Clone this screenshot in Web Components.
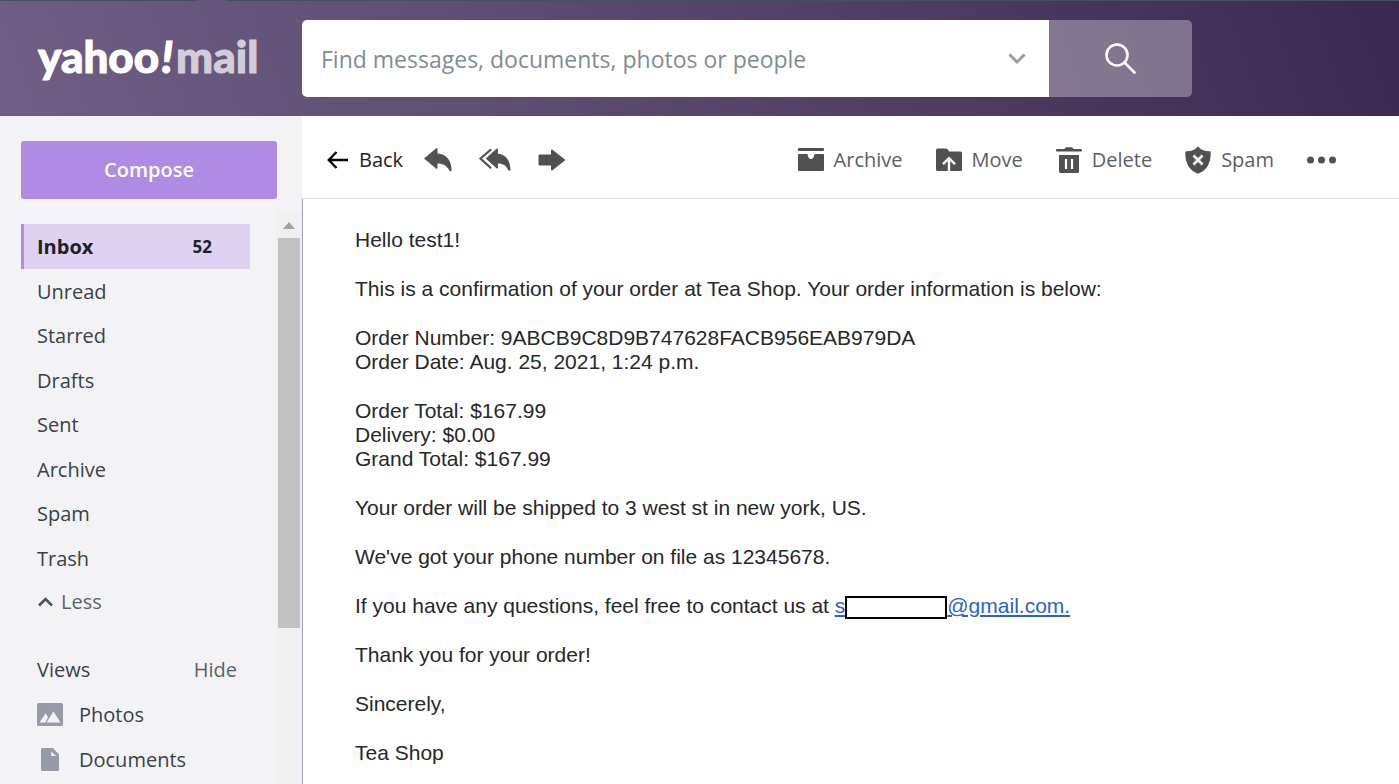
<!DOCTYPE html>
<html lang="en">
<head>
<meta charset="utf-8">
<title>Yahoo Mail</title>
<style>
  body { margin: 0; font-family: "Open Sans", "Noto Sans", sans-serif; font-size: 20px; line-height: 28px; color: #3a4148; background: #fff; }
</style>
</head>
<body>
<mail-app></mail-app>

<template id="mail-app">
  <style>
    :host { display: flex; flex-direction: column; min-height: 100vh; }
    .body { flex: 1; display: grid; grid-template-columns: 302px minmax(0, 1fr); }
    main { display: flex; flex-direction: column; min-width: 0; background: #fff; }
    mail-message { flex: 1; }
  </style>
  <mail-header></mail-header>
  <div class="body">
    <mail-sidebar></mail-sidebar>
    <main>
      <mail-toolbar></mail-toolbar>
      <mail-message>
        <p>Hello test1!</p>
        <p>This is a confirmation of your order at Tea Shop. Your order information is below:</p>
        <p>Order Number: 9ABCB9C8D9B747628FACB956EAB979DA<br>Order Date: Aug. 25, 2021, 1:24 p.m.</p>
        <p>Order Total: $167.99<br>Delivery: $0.00<br>Grand Total: $167.99</p>
        <p>Your order will be shipped to 3 west st in new york, US.</p>
        <p>We've got your phone number on file as 12345678.</p>
        <p>If you have any questions, feel free to contact us at <redacted-link></redacted-link></p>
        <p>Thank you for your order!</p>
        <p>Sincerely,</p>
        <p>Tea Shop</p>
      </mail-message>
    </main>
  </div>
</template>

<template id="mail-header">
  <style>
    :host { display: flex; box-sizing: border-box; height: 116px; padding: 20px 207px 19px 0;
      background:
        linear-gradient(90deg, #46505c 0 198px, transparent 198px 226px, #46505c 226px) 0 0 / 100% 1px no-repeat,
        linear-gradient(70deg, #705f85 0%, #65547a 22%, #4d3b62 68%, #3b284f 100%); }
    form { flex: 1; display: flex; min-width: 0; border-radius: 5px; overflow: hidden; }
    .field { flex: 1; display: flex; min-width: 0; background: #fff; }
    input { flex: 1; min-width: 0; border: 0; outline: 0; background: none; padding: 0 0 0 19px; font: inherit; font-size: 23px; color: #2c363f; }
    input::placeholder { color: #828c94; opacity: 1; }
    button { border: 0; padding: 0; background: none; display: grid; place-items: center; }
    .more { width: 64px; }
    .go { width: 143px; background: rgba(255,255,255,.32); }
    svg { display: block; }
  </style>
  <mail-logo></mail-logo>
  <form role="search">
    <div class="field">
      <input type="text" aria-label="Search mail" placeholder="Find messages, documents, photos or people">
      <button class="more" type="button" aria-label="Search options">
        <svg width="18" height="12" viewBox="0 0 18 12" fill="none" stroke="#979ba7" stroke-width="3"><path d="M1.500 1.500 9 9l7.500-7.500"/></svg>
      </button>
    </div>
    <button class="go" type="button" aria-label="Search">
      <svg width="32" height="32" viewBox="0 0 32 32" fill="none" stroke="#fff" stroke-width="2.600" stroke-linecap="round"><circle cx="12" cy="12" r="10.500"/><path d="M20 20 29.500 29.500"/></svg>
    </button>
  </form>
</template>

<template id="mail-logo">
  <style>
    :host { flex: none; box-sizing: border-box; width: 302px; padding: 12px 0 0 38px; }
    a { display: flex; font-family: Lato, sans-serif; font-weight: 900; font-size: 44px; line-height: 48px; color: #fff; text-decoration: none; -webkit-text-stroke: 1px currentColor; }
    .bang { font-style: italic; padding: 0 3px 0 2px; }
    .mail { color: #d3ccda; }
  </style>
  <a href="#" aria-label="Yahoo Mail"><span>yahoo</span><span class="bang">!</span><span class="mail">mail</span></a>
</template>

<template id="mail-sidebar">
  <style>
    :host { display: flex; flex-direction: column; background: #f3f3f6; }
    .compose { margin: 25px 25px 13px 21px; height: 58px; border: 0; border-radius: 3px; background: #b08be6; color: #fff; font: inherit; font-weight: 600; }
    .scroll { flex: 1; display: grid; grid-template-columns: minmax(0, 1fr) 26px; }
    nav { padding: 12px 26px 1px 21px; }
    ul { list-style: none; margin: 0; padding: 0; }
    .folders { display: flex; flex-direction: column; justify-content: space-between; height: 357px; --row-height: 44px; }
    .less { display: flex; align-items: center; gap: 8px; height: 38px; margin: 2px 0 27px; padding: 0 0 0 17px; border: 0; background: none; font: inherit; color: #5b636a; }
    .views { display: flex; align-items: center; justify-content: space-between; height: 44px; padding: 0 13px 0 16px; }
    h2 { margin: 0; font: inherit; }
    .hide { border: 0; padding: 0; background: none; font: inherit; color: #5b636a; }
    svg { display: block; }
    .track { display: flex; flex-direction: column; padding: 0 2px; background: #f0f0f1; }
    .up { height: 26px; display: grid; place-items: center; }
    .thumb { flex: 390; background: #c1c1c1; }
    .rest { flex: 156; }
  </style>
  <button class="compose" type="button">Compose</button>
  <div class="scroll">
    <nav aria-label="Folders">
      <ul class="folders">
        <li><folder-link current>Inbox<span slot="count">52</span></folder-link></li>
        <li><folder-link>Unread</folder-link></li>
        <li><folder-link>Starred</folder-link></li>
        <li><folder-link>Drafts</folder-link></li>
        <li><folder-link>Sent</folder-link></li>
        <li><folder-link>Archive</folder-link></li>
        <li><folder-link>Spam</folder-link></li>
        <li><folder-link>Trash</folder-link></li>
      </ul>
      <button class="less" type="button"><svg width="15" height="10" viewBox="0 0 15 10" fill="none" stroke="#4c545b" stroke-width="2.600"><path d="M1 8.500 7.500 2 14 8.500"/></svg>Less</button>
      <div class="views"><h2>Views</h2><button class="hide" type="button">Hide</button></div>
      <ul>
        <li><folder-link><svg slot="icon" width="26" height="23" viewBox="0 0 26 23"><rect width="26" height="23" rx="1.500" fill="#979ba7"/><path d="M2.500 19.500 8.500 10.500 11 14 8.500 19.500zM9.500 19.500 16.500 8.500 23.500 19.500z" fill="#f3f3f6"/></svg>Photos</folder-link></li>
        <li><folder-link><svg slot="icon" width="26" height="23" viewBox="0 0 26 23"><path d="M5.500 0h10.500l6 6.500V21.500a1.500 1.500 0 0 1-1.500 1.500h-15a1.500 1.500 0 0 1-1.500-1.500v-20a1.500 1.500 0 0 1 1.500-1.500z" fill="#979ba7"/><path d="M14.200 3.400V8H19z" fill="#f3f3f6"/></svg>Documents</folder-link></li>
      </ul>
    </nav>
    <div class="track" aria-hidden="true">
      <div class="up"><svg width="12" height="7" viewBox="0 0 12 7"><path d="M6 0l6 7H0z" fill="#a3a3a3"/></svg></div>
      <div class="thumb"></div>
      <div class="rest"></div>
    </div>
  </div>
</template>

<template id="folder-link">
  <style>
    :host { display: block; }
    a { display: flex; align-items: center; height: var(--row-height, 45px); box-sizing: border-box; padding: 0 38px 0 13px; border-left: 3px solid transparent; color: inherit; text-decoration: none; }
    :host([current]) a { height: 45px; background: #dfd1f1; border-color: #b08be6; color: #1d2228; font-weight: 700; }
    ::slotted([slot="icon"]) { margin-right: 16px; }
    ::slotted([slot="count"]) { margin-left: auto; font-size: 17px; }
  </style>
  <a href="#"><slot name="icon"></slot><slot></slot><slot name="count"></slot></a>
</template>

<template id="mail-toolbar">
  <style>
    :host { display: flex; justify-content: space-between; align-items: center; box-sizing: border-box; height: 83px; padding: 6px 63px 0 25px; border-bottom: 1px solid #e0e4e9; }
    .group { display: flex; align-items: center; }
    .left { gap: 21px; }
    .replies { gap: 27px; }
    .right { gap: 33px; }
    svg { display: block; }
  </style>
  <div class="group left">
    <tool-button strong>
      <svg slot="icon" width="22" height="20" viewBox="0 0 22 20" fill="none" stroke="#000" stroke-width="2.400"><path d="M21 10H2M9.500 2 1.800 10 9.500 18"/></svg>Back
    </tool-button>
    <div class="group replies">
      <tool-button label="Reply">
        <svg slot="icon" width="28" height="24" viewBox="0 0 28 24" fill="#4f5152"><path d="M0 10.500 12 0.400Q13.500-.5 13.500 1.200V5.500C22 6 27 11.500 27.600 21.500 27.700 24 25.800 23.300 25.200 22.200 22.500 17.500 19 15.600 13.500 15.500V19.800Q13.500 21.500 12 20.600z"/></svg>
      </tool-button>
      <tool-button label="Reply all">
        <svg slot="icon" width="32" height="24" viewBox="0 0 33 24" fill="#4f5152"><path d="M7 10.500 18 0.400Q19.500-.5 19.500 1.200V5.500C27 6 32 11.500 32.400 21.500 32.400 24 31 23.300 30.200 22.200 28 17.500 25 15.600 19.500 15.500V19.800Q19.500 21.500 18 20.600z"/><path d="M12.500 1 1.500 10.500 12.500 20.500" fill="none" stroke="#4f5152" stroke-width="2.200"/></svg>
      </tool-button>
      <tool-button label="Forward">
        <svg slot="icon" width="28" height="22" viewBox="0 0 28 22" fill="#4f5152"><path d="M1.500 5.500H13V1.500Q13-.2 14.500.8L27.500 11 14.500 21.200Q13 22.200 13 20.500V16.500H1.500A1 1 0 0 1 .5 15.500V6.500A1 1 0 0 1 1.500 5.500z"/></svg>
      </tool-button>
    </div>
  </div>
  <div class="group right">
    <tool-button>
      <svg slot="icon" width="26" height="24" viewBox="0 0 26 24" fill="#4f5152"><rect y="0" width="26" height="3" rx="1"/><path d="M1 6H9.500C10 9 11 11 13 11S16 9 16.500 6H25a1 1 0 0 1 1 1V22a1 1 0 0 1-1 1H1a1 1 0 0 1-1-1V7a1 1 0 0 1 1-1z"/></svg>Archive
    </tool-button>
    <tool-button>
      <svg slot="icon" width="26" height="24" viewBox="0 0 26 24"><path d="M1.500 0.500H10Q12 .5 13 3.500H24.500A1.500 1.500 0 0 1 26 5V21.500A1.500 1.500 0 0 1 24.500 23H1.500A1.500 1.500 0 0 1 0 21.500V2A1.500 1.500 0 0 1 1.500 .5z" fill="#4f5152"/><path d="M13 23.500V10.500M7 16.200 13 10.200 19 16.200" fill="none" stroke="#fff" stroke-width="2.400"/></svg>Move
    </tool-button>
    <tool-button>
      <svg slot="icon" width="26" height="26" viewBox="0 0 26 26"><path d="M1 2H8.500Q9 .2 10.500.2H15.500Q17 .2 17.500 2H25a1 1 0 0 1 1 1v.6a1 1 0 0 1-1 1H1a1 1 0 0 1-1-1V3a1 1 0 0 1 1-1zM3 8H23V24.500A1.500 1.500 0 0 1 21.500 26H4.500A1.500 1.500 0 0 1 3 24.500z" fill="#4f5152"/><path d="M10 12V22M16 12V22" stroke="#fff" stroke-width="2.200"/></svg>Delete
    </tool-button>
    <tool-button>
      <svg slot="icon" width="26" height="28" viewBox="0 0 26 28"><path d="M13 .5 16 3.200Q20 5.600 25.500 5.200 26.500 13.500 23 19.500 19.500 25.500 13 27.700 6.500 25.500 3 19.500-.5 13.500.5 5.200 6 5.600 10 3.200z" fill="#4f5152"/><path d="M8.500 9.500 17.500 18.500M17.500 9.500 8.500 18.500" stroke="#fff" stroke-width="2.600"/></svg>Spam
    </tool-button>
    <tool-button label="More actions">
      <svg slot="icon" width="29" height="8" viewBox="0 0 29 8" fill="#4f5152"><circle cx="3.500" cy="4" r="3.500"/><circle cx="14.500" cy="4" r="3.500"/><circle cx="25.500" cy="4" r="3.500"/></svg>
    </tool-button>
  </div>
</template>

<template id="tool-button">
  <style>
    :host { display: block; color: #5a5f64; }
    :host([strong]) { color: #1d2228; }
    button { display: flex; align-items: center; gap: 10px; height: 40px; border: 0; padding: 0; background: none; font: inherit; color: inherit; white-space: nowrap; }
  </style>
  <button type="button"><slot name="icon"></slot><slot></slot></button>
</template>

<template id="mail-message">
  <style>
    :host { display: flex; flex-direction: column; gap: 25px; box-sizing: border-box; padding: 29px 52px 19px 52px; border-left: 1px solid #9da0ae; font-family: "Liberation Sans", Arial, sans-serif; font-size: 21px; line-height: 24px; color: #26282a; }
    ::slotted(p) { margin: 0; }
  </style>
  <slot></slot>
</template>

<template id="redacted-link">
  <style>
    :host { display: inline; }
    a { color: #2a62d0; text-decoration: underline; }
    .mask { display: inline-block; box-sizing: border-box; width: 102px; height: 23px; margin: -6px 0; border: 2px solid #000; background: #fff; vertical-align: baseline; }
  </style>
  <a href="#">s<span class="mask"></span>@gmail.com.</a>
</template>

<script>
  const define = (name, setup) => customElements.define(name, class extends HTMLElement {
    constructor() {
      super();
      this.attachShadow({ mode: "open" }).append(document.getElementById(name).content.cloneNode(true));
    }
    connectedCallback() {
      if (setup) setup(this, this.shadowRoot);
    }
  });

  define("redacted-link");
  define("folder-link", (host, root) => {
    if (host.hasAttribute("current")) root.querySelector("a").setAttribute("aria-current", "page");
  });
  define("tool-button", (host, root) => {
    const label = host.getAttribute("label");
    if (label) root.querySelector("button").setAttribute("aria-label", label);
  });
  define("mail-logo");
  define("mail-header");
  define("mail-sidebar");
  define("mail-toolbar");
  define("mail-message");
  define("mail-app");
</script>
</body>
</html>
